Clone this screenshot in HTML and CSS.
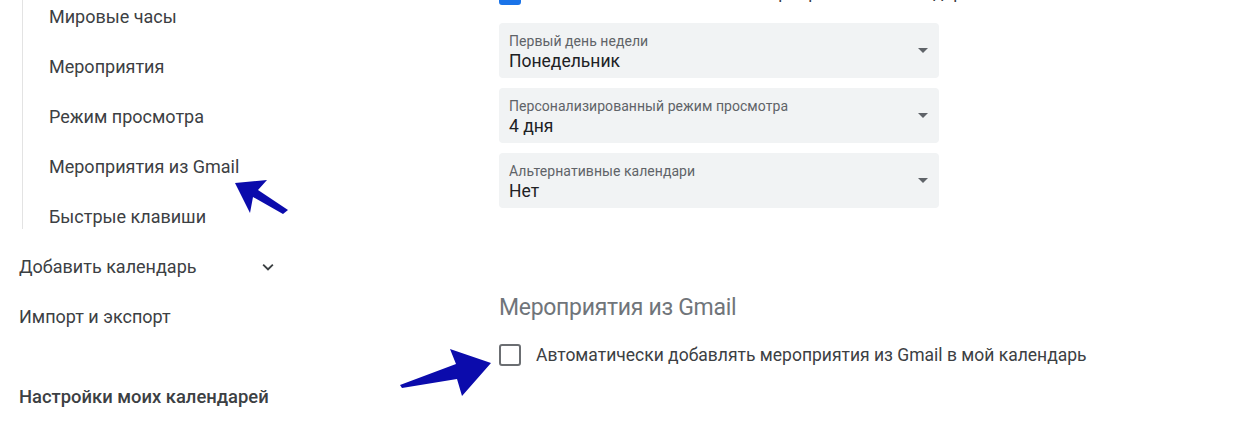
FILE: index.html
```html
<!DOCTYPE html>
<html lang="ru">
<head>
<meta charset="utf-8">
<title>Настройки</title>
<link rel="stylesheet" href="styles.css">
</head>
<body>
<div class="page">
  <aside class="sidebar">
    <ul class="subnav">
      <li>Мировые часы</li>
      <li>Мероприятия</li>
      <li>Режим просмотра</li>
      <li>Мероприятия из Gmail</li>
      <li>Быстрые клавиши</li>
    </ul>
    <ul class="nav">
      <li class="nav-item">Добавить календарь
        <svg class="chev" width="24" height="24" viewBox="0 0 24 24"><path d="M7.4 8.6 12 13.2l4.6-4.6L18 10l-6 6-6-6z" fill="#3c4043"/></svg>
      </li>
      <li class="nav-item">Импорт и экспорт</li>
      <li class="nav-item nav-title">Настройки моих календарей</li>
    </ul>
  </aside>
  <main class="main">
    <div class="check-row top-row">
      <span class="box checked"></span>
      <span class="check-text">Показывать отклоненные мероприятия в календаре</span>
    </div>
    <div class="selects">
      <div class="select">
        <div class="select-text">
          <div class="label">Первый день недели</div>
          <div class="value">Понедельник</div>
        </div>
        <span class="caret"></span>
      </div>
      <div class="select">
        <div class="select-text">
          <div class="label">Персонализированный режим просмотра</div>
          <div class="value">4 дня</div>
        </div>
        <span class="caret"></span>
      </div>
      <div class="select">
        <div class="select-text">
          <div class="label">Альтернативные календари</div>
          <div class="value">Нет</div>
        </div>
        <span class="caret"></span>
      </div>
    </div>
    <h2 class="section-title">Мероприятия из Gmail</h2>
    <div class="check-row">
      <span class="box"></span>
      <span class="check-text">Автоматически добавлять мероприятия из Gmail в мой календарь</span>
    </div>
  </main>
  <svg class="arrows" width="1259" height="428" viewBox="0 0 1259 428">
    <polygon points="235,183 267,180 258,190 288,210 283,214 253,197 250,213" fill="#0b0bac"/>
    <polygon points="491,363 450,349 456,364 400,385 402,388 457,379 462,396" fill="#0b0bac"/>
  </svg>
</div>
</body>
</html>
```

FILE: styles.css
```css
* { box-sizing: border-box; }
html, body { margin: 0; padding: 0; }
body {
  font-family: Roboto, "Noto Sans", Arial, sans-serif;
  background: #fff;
  color: #3c4043;
  width: 1259px;
  height: 428px;
  overflow: hidden;
}
.page {
  position: relative;
  display: flex;
  width: 1259px;
  height: 428px;
  overflow: hidden;
}
.sidebar {
  width: 499px;
  flex: none;
}
ul { list-style: none; margin: 0; padding: 0; }
.subnav {
  margin: -21px 0 0 22px;
  padding: 26px 0 0 26px;
  border-left: 1px solid #e3e3e3;
  display: flex;
  flex-direction: column;
  gap: 26px;
  font-size: 18px;
}
.subnav li {
  height: 24px;
  line-height: 24px;
}
.nav {
  margin-top: 13px;
  padding-left: 19px;
  font-size: 18px;
}
.nav-item {
  height: 50px;
  line-height: 50px;
  display: flex;
  align-items: center;
  width: 258px;
  justify-content: space-between;
}
.chev { width: 22px; height: 22px; margin-right: -2px; }
.nav-title {
  margin-top: 30px;
  font-weight: 500;
  font-size: 18.4px;
  color: #3c4043;
}
.main {
  flex: 1;
  margin-top: -18px;
}
.check-row {
  display: flex;
  align-items: center;
  height: 24px;
  gap: 15px;
  font-size: 17.5px;
  color: #3c4043;
}
.box {
  width: 22px;
  height: 22px;
  border: 2.5px solid #6b6e72;
  border-radius: 3px;
  flex: none;
}
.box.checked {
  background: #1a73e8;
  border-color: #1a73e8;
}
.top-row .check-text {
  position: relative;
  top: -2px;
}
.selects {
  margin-top: 17px;
  display: flex;
  flex-direction: column;
  gap: 10px;
  width: 440px;
}
.select {
  height: 55px;
  background: #f1f3f4;
  border-radius: 4px;
  display: flex;
  align-items: center;
  padding: 0 11px 0 10px;
}
.select-text {
  flex: 1;
  padding-top: 1px;
}
.label {
  font-size: 14px;
  line-height: 20px;
  color: #5f6368;
  letter-spacing: 0.05px;
}
.value {
  font-size: 17.5px;
  line-height: 20px;
  color: #202124;
}
.caret {
  width: 0;
  height: 0;
  border-left: 5px solid transparent;
  border-right: 5px solid transparent;
  border-top: 5px solid #5f6368;
}
.section-title {
  margin: 86px 0 0;
  font-size: 23px;
  line-height: 28px;
  font-weight: 400;
  color: #70757a;
  letter-spacing: -0.3px;
}
.section-title + .check-row {
  margin-top: 21px;
}
.arrows {
  position: absolute;
  left: 0;
  top: 0;
  pointer-events: none;
}
```
